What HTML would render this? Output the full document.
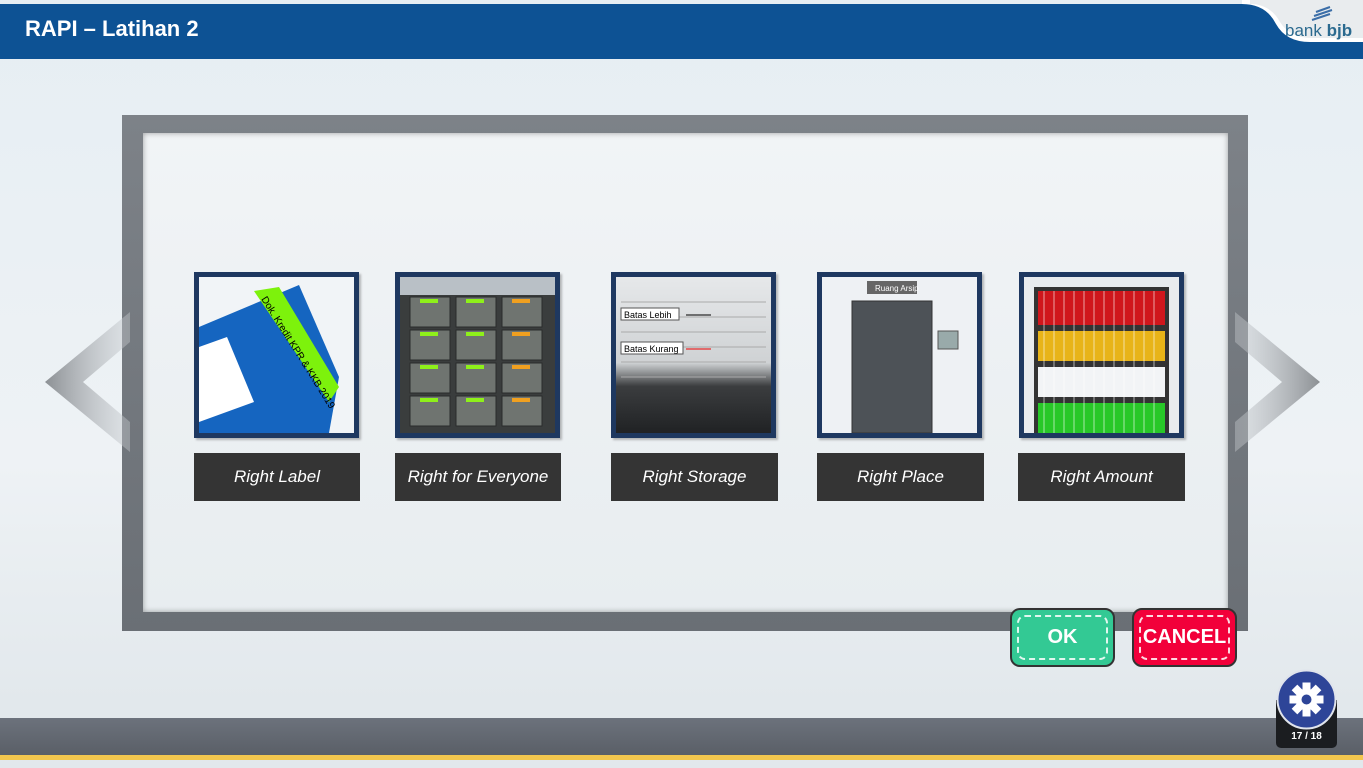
<!DOCTYPE html>
<html><head><meta charset="utf-8"><style>
*{margin:0;padding:0;box-sizing:border-box}
body{width:1363px;height:768px;overflow:hidden;background:#fff;font-family:"Liberation Sans",sans-serif;position:relative}
.bg{position:absolute;left:0;top:0;width:1363px;height:768px;background:linear-gradient(180deg,#e6eef3 0%,#eef2f5 60%,#e2e8ec 92%)}
.hdr{position:absolute;left:0;top:4px;width:1363px;height:55px;background:#0d5294}
.hdr h1{position:absolute;left:25px;top:12px;color:#fff;font-size:22px;font-weight:bold}
.frame{position:absolute;left:122px;top:115px;width:1126px;height:516px;background:linear-gradient(180deg,#7d8288,#6a6f75);}
.inner{position:absolute;left:143px;top:133px;width:1085px;height:479px;background:linear-gradient(180deg,#f1f4f6,#e8edf0);box-shadow:inset 0 0 6px rgba(0,0,0,.35)}
.strip{position:absolute;left:0;top:718px;width:1363px;height:37px;background:linear-gradient(180deg,#6c727c,#5a5f67)}
.yel{position:absolute;left:0;top:755px;width:1363px;height:5px;background:#f2c64e}
.th{position:absolute;top:272px;width:165px;height:166px;border:5px solid #1e3860;background:#f1f4f7;overflow:hidden;box-shadow:2px 2px 2px rgba(0,0,0,.25)}
.lb{position:absolute;top:453px;height:48px;background:#343434;color:#fff;font-style:italic;font-size:17px;text-align:center;line-height:48px}
.btn{position:absolute;top:608px;width:105px;height:59px;border:2px solid #333;border-radius:10px;color:#fff;font-weight:bold;font-size:20px;text-align:center;line-height:55px}
.btn:after{content:"";position:absolute;left:5px;top:5px;right:5px;bottom:5px;border:2px dashed rgba(255,255,255,.85);border-radius:8px}
</style></head><body>
<div class="bg"></div>
<div class="hdr"><h1>RAPI – Latihan 2</h1></div>
<svg style="position:absolute;left:1220px;top:0" width="143" height="60"><path d="M22 4 Q46 4 56 24 Q66 42 90 42 L143 42 L143 0 L22 0Z" fill="#fff"/><path d="M30 4 Q50 4 60 22 Q70 38 92 38 L143 38 L143 0 L30 0Z" fill="#e9ecee"/><path d="M96 12 l14 -5 M94 16 l18 -6 M92 20 l18 -6" stroke="#3b6ea8" stroke-width="2"/><text x="65" y="36" font-family="Liberation Sans" font-size="17" fill="#2b6a8f">bank <tspan font-weight="bold">bjb</tspan></text></svg>
<div class="frame"></div><div class="inner"></div>
<div class="strip"></div><div class="yel"></div>
<svg style="position:absolute;left:45px;top:312px" width="90" height="140"><defs><linearGradient id="ga" x1="0" x2="1"><stop offset="0" stop-color="#8c9094"/><stop offset="1" stop-color="#c8ccd0" stop-opacity=".4"/></linearGradient></defs><path d="M85 0 L0 70 L85 140 L85 110 L38 70 L85 30Z" fill="url(#ga)"/></svg>
<svg style="position:absolute;left:1230px;top:312px" width="90" height="140"><defs><linearGradient id="gb" x1="1" x2="0"><stop offset="0" stop-color="#8c9094"/><stop offset="1" stop-color="#c8ccd0" stop-opacity=".4"/></linearGradient></defs><path d="M5 0 L90 70 L5 140 L5 110 L52 70 L5 30Z" fill="url(#gb)"/></svg>

<div class="th" style="left:194px"><svg width="155" height="156"><path d="M0 50 L100 8 L140 100 L130 156 L0 156Z" fill="#1565c0"/><path d="M55 14 L80 10 L140 110 L130 125Z" fill="#7df20c"/><text transform="translate(62,22) rotate(58)" font-size="10" fill="#000">Dok. Kredit KPR &amp; KKB 2019</text><path d="M0 70 L28 60 L55 125 L0 145Z" fill="#fff"/></svg></div>
<div class="th" style="left:395px;background:#3a3d3d"><div style="height:18px;background:#b9c0c6"></div><svg width="155" height="140"><g fill="#6f7470" stroke="#2a2c2c"><rect x="10" y="2" width="40" height="30"/><rect x="56" y="2" width="40" height="30"/><rect x="102" y="2" width="40" height="30"/><rect x="10" y="35" width="40" height="30"/><rect x="56" y="35" width="40" height="30"/><rect x="102" y="35" width="40" height="30"/><rect x="10" y="68" width="40" height="30"/><rect x="56" y="68" width="40" height="30"/><rect x="102" y="68" width="40" height="30"/><rect x="10" y="101" width="40" height="30"/><rect x="56" y="101" width="40" height="30"/><rect x="102" y="101" width="40" height="30"/></g><g fill="#8ef01a"><rect x="20" y="4" width="18" height="4"/><rect x="66" y="4" width="18" height="4"/><rect x="20" y="37" width="18" height="4"/><rect x="66" y="37" width="18" height="4"/><rect x="20" y="70" width="18" height="4"/><rect x="66" y="70" width="18" height="4"/><rect x="20" y="103" width="18" height="4"/><rect x="66" y="103" width="18" height="4"/></g><g fill="#f0a020"><rect x="112" y="4" width="18" height="4"/><rect x="112" y="37" width="18" height="4"/><rect x="112" y="70" width="18" height="4"/><rect x="112" y="103" width="18" height="4"/></g></svg></div>
<div class="th" style="left:611px;background:linear-gradient(180deg,#e6e8ea 0%,#cfd2d4 55%,#3b3d3f 70%,#202224 100%)"><svg width="155" height="156"><g stroke="#aaa" stroke-width="1"><path d="M5 25 H150 M5 40 H150 M5 55 H150 M5 70 H150 M5 85 H150 M5 100 H150"/></g><rect x="5" y="31" width="58" height="12" fill="#fff" stroke="#555"/><text x="8" y="41" font-size="9">Batas Lebih</text><path d="M70 38 H95" stroke="#000"/><rect x="5" y="65" width="62" height="12" fill="#fff" stroke="#555"/><text x="8" y="75" font-size="9">Batas Kurang</text><path d="M70 72 H95" stroke="#e00"/></svg></div>
<div class="th" style="left:817px;background:#eef1f4"><svg width="155" height="156"><rect x="45" y="4" width="50" height="13" fill="#666"/><text x="53" y="14" font-size="8" fill="#fff">Ruang Arsip</text><rect x="30" y="24" width="80" height="132" fill="#4d5257" stroke="#333"/><rect x="116" y="54" width="20" height="18" fill="#9aa" stroke="#555"/></svg></div>
<div class="th" style="left:1019px;background:#e8ebee"><svg width="155" height="156"><rect x="10" y="10" width="135" height="146" fill="#333"/><rect x="14" y="14" width="127" height="34" fill="#d0161c"/><rect x="14" y="54" width="127" height="30" fill="#e8b418"/><rect x="14" y="90" width="127" height="30" fill="#f2f4f6"/><rect x="14" y="126" width="127" height="30" fill="#28c828"/><g stroke="#fff" stroke-width="1" opacity=".6"><path d="M20 14V156M30 14V156M40 14V156M50 14V156M60 14V156M70 14V156M80 14V156M90 14V156M100 14V156M110 14V156M120 14V156M130 14V156"/></g></svg></div>

<div class="lb" style="left:194px;width:166px">Right Label</div>
<div class="lb" style="left:395px;width:166px">Right for Everyone</div>
<div class="lb" style="left:611px;width:167px">Right Storage</div>
<div class="lb" style="left:817px;width:167px">Right Place</div>
<div class="lb" style="left:1018px;width:167px">Right Amount</div>

<div class="btn" style="left:1010px;background:#33c994">OK</div>
<div class="btn" style="left:1132px;background:#f2003a">CANCEL</div>

<div style="position:absolute;left:1276px;top:700px;width:61px;height:48px;background:#1b1d20;border-radius:0 0 5px 5px;color:#fff;font-size:10px;font-weight:bold;text-align:center;padding-top:31px">17 / 18</div>
<svg style="position:absolute;left:1276px;top:669px" width="61" height="61"><circle cx="30.5" cy="30.5" r="29" fill="#2e4598" stroke="#e0e4ec" stroke-width="2"/><g fill="#fff" transform="translate(30.5,30.5)"><circle r="11"/><rect x="-4" y="-17" width="8" height="34"/><rect x="-17" y="-4" width="34" height="8"/><rect x="-4" y="-17" width="8" height="34" transform="rotate(45)"/><rect x="-4" y="-17" width="8" height="34" transform="rotate(-45)"/><circle r="5" fill="#2e4598"/></g></svg>
</body></html>
